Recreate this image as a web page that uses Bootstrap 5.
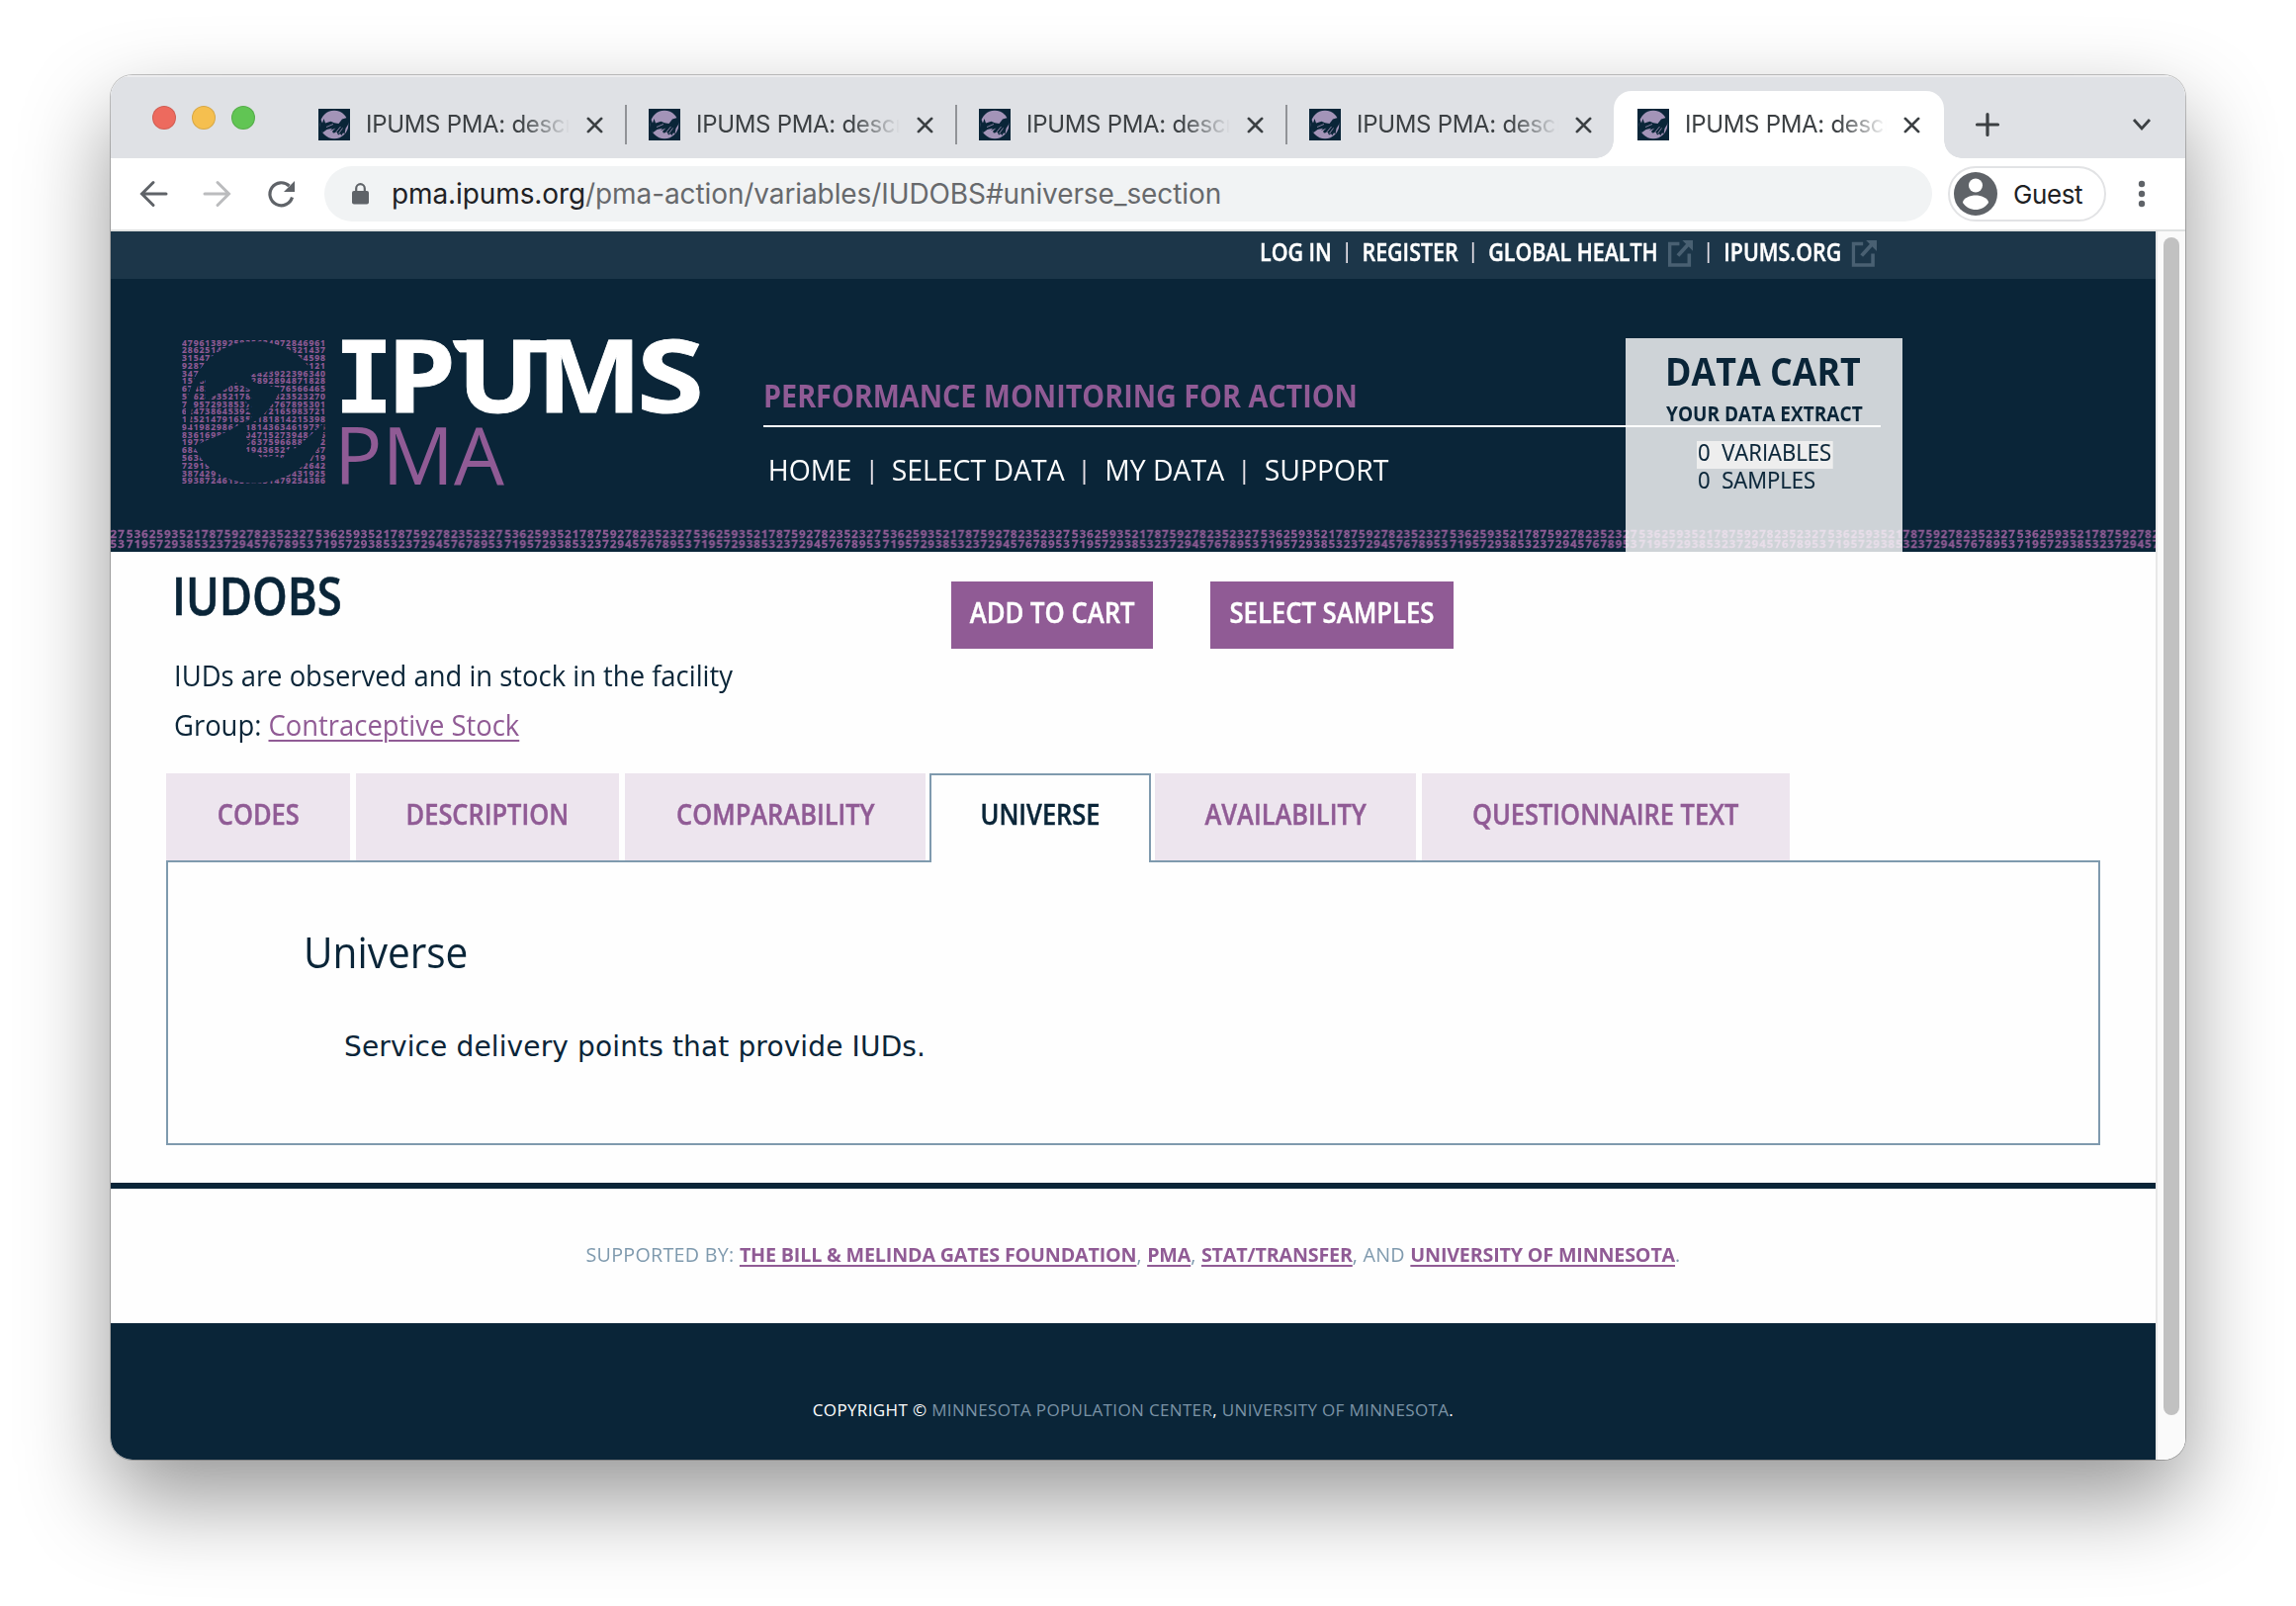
<!DOCTYPE html>
<html lang="en">
<head>
<meta charset="utf-8">
<meta name="viewport" content="width=device-width, initial-scale=1">
<title>IPUMS PMA: descr: IUDOBS</title>
<link href="https://cdn.jsdelivr.net/npm/bootstrap@5.3.0/dist/css/bootstrap.min.css" rel="stylesheet">
<style>
:root{--navy:#0a2538;--plum:#905b95;--slate:#7f9aae}
body{background:#fff;color:var(--navy);font-family:"Open Sans","Noto Sans",sans-serif;overflow:hidden;height:1624px;padding:76px 112px 0}
svg{display:block;flex:none}
a{color:inherit;text-decoration:none}
/* narrow lettering: --k is the horizontal squeeze */
.narrow{transform:scaleX(var(--k));transform-origin:0 50%}
.narrow-mid{display:inline-block;transform:scaleX(var(--k))}
/* browser window */
.win{width:2098px;height:1400px;border-radius:22px;overflow:hidden;background:#fff}
.win-shadow{width:2098px;border-radius:22px;box-shadow:0 0 0 1px rgba(0,0,0,.22),0 40px 90px rgba(0,0,0,.41)}
.chrome-ui{font-family:Inter,Roboto,sans-serif;color:#3c4043}
.tabstrip{height:84px;background:#dfe1e5;box-shadow:inset 0 2px 0 #ececee;padding-left:42px}
.lights{gap:16px;padding-top:31px;width:146px}
.lights i{width:24px;height:24px;border-radius:50%;border:1px solid rgba(0,0,0,.12)}
.btab{width:334px;height:68px;margin-top:16px;padding:0 0 0 22px}
.btab.short{width:330px}
.btab .ttl{width:206px;margin-left:16px;font-size:24px;line-height:64px;letter-spacing:-.3px;white-space:nowrap;overflow:hidden;-webkit-mask-image:linear-gradient(90deg,#000 76%,transparent);mask-image:linear-gradient(90deg,#000 76%,transparent)}
.btab.short .ttl,.btab.on .ttl{width:204px}
.btab .cls{margin-left:17px}
.btab .vsep{width:2px;height:40px;background:#919397;margin-left:22px}
.btab.on{background:#fff;border-radius:18px 18px 0 0;padding-left:24px;width:334px;position:relative}
.btab.on::before,.btab.on::after{content:"";position:absolute;bottom:0;width:18px;height:18px}
.btab.on::before{left:-18px;background:radial-gradient(circle at 0 0,transparent 17.5px,#fff 18px)}
.btab.on::after{right:-18px;background:radial-gradient(circle at 100% 0,transparent 17.5px,#fff 18px)}
.toolbar{height:74px;border-bottom:2px solid #dfe1e1;background:#fff;padding-left:27px}
.omni{width:1626px;height:56px;border-radius:28px;background:#f1f3f4;margin-left:26px;padding-left:28px;font-size:28px;line-height:56px;color:#67696c}
.omni .url{margin-left:23px;letter-spacing:-.1px;white-space:nowrap}
.omni b{font-weight:400;color:#202124}
.guest{width:160px;height:56px;border:2px solid #e2e3e5;border-radius:28px;margin-left:16px;padding-left:4px;font-size:26px;line-height:52px;color:#202124}
.guest span{margin-left:16px;letter-spacing:-.4px;padding-top:1px}
/* page and scrollbar */
.viewport{height:1242px}
.sheet{width:2068px;background:#fefefe}
.sbar{width:30px;border-left:2px solid #e8e8e8;background:#fafafa;padding:6px 0 0 6px}
.sbar i{display:block;width:16px;height:1191px;border-radius:8px;background:#c1c1c1}
.topbar{height:48px;background:#1c3649;padding-right:282px}
.topbar .links{--k:.856;transform-origin:100% 50%;font-size:25px;font-weight:600;line-height:41px;color:#fff;white-space:nowrap;-webkit-text-stroke:.45px}
.topbar .bar{width:2.4px;height:21px;margin:11px 16.7px 0;background:#e4dfe6}
.topbar svg{margin:8px 0 0 12px}
.masthead{height:276px;background:var(--navy);position:relative}
.logo{margin:60px 0 0 72px}
.headline{margin-left:62px;width:1130px;padding-top:99px}
.headline h2{--k:.898;font-size:32px;font-weight:700;line-height:38px;color:var(--plum);margin:0}
.headline hr{margin:11px 0 0;border:0;height:2px;background:#fff;opacity:1;position:relative;z-index:3}
.sitenav{--k:.963;padding:23px 0 0 5px;font-size:29.5px;line-height:40px;color:#fff}
.sitenav .bar{width:2px;height:25px;margin:10px 20px 0;background:#e4dfe6}
.digits{position:absolute;left:0;bottom:0}
.cart{position:absolute;left:1532px;top:60px;width:280px;height:216px;background:rgba(255,255,255,.8);z-index:2;white-space:nowrap}
.cart .t1{--k:.918;font-size:39px;font-weight:700;line-height:40px;margin:0 0 0 40px;padding-top:13px}
.cart .t2{--k:.866;font-size:22px;font-weight:700;line-height:28px;margin:0 0 0 41px;padding-top:8px}
.cart ul{--k:.9;margin:15px 0 0 72px;padding:0;list-style:none;font-size:24.5px}
.cart li{width:153px;height:28px;padding-left:1px;line-height:21px;-webkit-text-stroke:.2px}
.cart li span{display:inline-block;width:27px}
.cart li.hot{background:#eee}
/* variable summary */
.summary{height:224px;padding:0 0 0 64px}
.summary h1{--k:.875;font-size:52px;font-weight:600;line-height:60px;margin:14px 0 0 -2px;-webkit-text-stroke:.6px}
.summary .info{width:786px}
.summary p{--k:.945;font-size:29px;line-height:50px;margin:0}
.summary p:first-of-type{margin-top:26px}
.summary u{color:var(--plum);text-underline-offset:4px;text-decoration-thickness:2px}
.pbtn.btn{--k:.885;background:var(--plum);color:#fff;border:0;border-radius:0;height:68px;width:204px;padding:0;font-size:29px;font-weight:600;line-height:62px;margin-top:30px;white-space:nowrap;-webkit-text-stroke:.45px}
.pbtn.wide{width:246px;margin-left:58px}
.vtabs{height:90px;padding-left:56px}
.vtabs .vt{--k:.877;height:88px;background:#ede5ee;color:var(--plum);font-size:29px;font-weight:600;line-height:82px;text-align:center;margin-right:6px;white-space:nowrap;-webkit-text-stroke:.45px}
.vtabs .vt.on{height:90px;width:224px;background:#fefefe;color:var(--navy);border:2px solid var(--slate);border-bottom:0;line-height:78px;margin:0 4px 0 -2px;position:relative;z-index:1}
.pane{margin:-2px 56px 0;height:288px;border:2px solid var(--slate);padding:61px 0 0 137px}
.pane h3{--k:.943;font-size:43px;font-weight:400;line-height:60px;margin:0}
.pane p{font-family:"DejaVu Sans",sans-serif;font-size:28px;line-height:40px;margin:46px 0 0 41px;letter-spacing:.14px;white-space:nowrap}
.rule{height:6px;background:var(--navy);margin-top:38px}
.support{--k:.985;height:136px;font-size:20px;line-height:28px;padding-top:53px;color:var(--slate);letter-spacing:.28px;white-space:nowrap}
.support u{font-weight:700;color:var(--plum);letter-spacing:-.18px;text-underline-offset:3px;text-decoration-thickness:2px}
.foot{height:138px;background:var(--navy);color:#fff;font-size:17px;line-height:24px;padding-top:76px;letter-spacing:.35px}
.foot span{color:#7b93a6}
</style>
</head>
<body>
<svg width="0" height="0" class="position-absolute" aria-hidden="true">
  <defs>
    <symbol id="fav" viewBox="0 0 32 32"><rect width="32" height="32" fill="#0a2538"/><circle cx="16" cy="16" r="14.3" fill="#a394b8"/><path d="M1.500 21 2 10 4 14.500 5.500 10 7 14.500 12.500 12.800 16 14.300 20.500 15 24 10.500 30.500 8.500 30 16 27.500 20 26.500 25.500 25 24.200 23.500 27 22 25.200 20 26.500 18.800 23.800 15 24.500 14 22.800 17.500 19.500 12 22 14 19.800 8.500 21 4.500 24Z" fill="#0a2538"/><path d="M8 18.500 15 15.500M17.500 24 22.500 18M20.500 25 24.500 19.500" stroke="#a394b8" stroke-width=".8"/></symbol>
    <symbol id="x" viewBox="0 0 18 18"><path d="M2 2l14 14M16 2L2 16" stroke="#3c4043" stroke-width="2.900" stroke-linecap="round"/></symbol>
    <symbol id="ext" viewBox="0 0 26 28" preserveAspectRatio="none"><path d="M12 4.500H2V26H22V14.500" fill="none" stroke="#496072" stroke-width="3.600"/><path d="M10.500 16.500 22 4" stroke="#496072" stroke-width="3.800"/><path d="M15 1H26V12L22.500 8.500 18 4Z" fill="#496072"/></symbol>
  </defs>
</svg>
<div class="win-shadow"><div class="win">
  <div class="chrome-ui">
    <div class="tabstrip d-flex">
      <div class="lights d-flex"><i style="background:#ed6a5e"></i><i style="background:#f5bf4f"></i><i style="background:#61c554"></i></div>
      <div class="btab d-flex align-items-center"><svg width="32" height="32"><use href="#fav"/></svg><div class="ttl">IPUMS PMA: descr</div><svg class="cls" width="17" height="17"><use href="#x"/></svg><i class="vsep"></i></div>
      <div class="btab d-flex align-items-center"><svg width="32" height="32"><use href="#fav"/></svg><div class="ttl">IPUMS PMA: descr</div><svg class="cls" width="17" height="17"><use href="#x"/></svg><i class="vsep"></i></div>
      <div class="btab d-flex align-items-center"><svg width="32" height="32"><use href="#fav"/></svg><div class="ttl">IPUMS PMA: descr</div><svg class="cls" width="17" height="17"><use href="#x"/></svg><i class="vsep"></i></div>
      <div class="btab short d-flex align-items-center"><svg width="32" height="32"><use href="#fav"/></svg><div class="ttl">IPUMS PMA: descr</div><svg class="cls" width="17" height="17"><use href="#x"/></svg></div>
      <div class="btab on d-flex align-items-center"><svg width="32" height="32"><use href="#fav"/></svg><div class="ttl">IPUMS PMA: descr</div><svg class="cls" width="17" height="17"><use href="#x"/></svg></div>
      <svg width="26" height="26" viewBox="0 0 26 26" style="margin:37px 0 0 31px"><path d="M13 2.500v21M2.500 13h21" stroke="#3c4043" stroke-width="3.200" stroke-linecap="round"/></svg>
      <svg width="20" height="14" viewBox="0 0 20 14" style="margin:43px 0 0 133px"><path d="M2 2l8 9 8-9" fill="none" stroke="#3c4043" stroke-width="2.800"/></svg>
    </div>
    <div class="toolbar d-flex align-items-center">
      <svg width="32" height="32" viewBox="0 0 32 32"><path d="M29 16H5M16 4.500 4.500 16 16 27.500" fill="none" stroke="#5f6368" stroke-width="3" stroke-linecap="round"/></svg>
      <svg width="32" height="32" viewBox="0 0 32 32" style="margin-left:33px"><path d="M3 16H27M16 4.500 27.500 16 16 27.500" fill="none" stroke="#bbbcbe" stroke-width="3" stroke-linecap="round"/></svg>
      <svg width="32" height="32" viewBox="0 0 32 32" style="margin-left:33px"><path d="M26.500 19.500A11.500 11.500 0 1 1 23.500 8" fill="none" stroke="#5f6368" stroke-width="3.200"/><path d="M29 3V14H18Z" fill="#5f6368"/></svg>
      <div class="omni d-flex align-items-center" style="margin-left:27px"><svg width="17" height="22" viewBox="0 0 17 22"><rect y="8" width="17" height="13.500" rx="2" fill="#5f6368"/><path d="M4.200 9V5.500a4.300 4.300 0 0 1 8.600 0V9" fill="none" stroke="#5f6368" stroke-width="2.200"/></svg><div class="url"><b>pma.ipums.org</b>/pma-action/variables/IUDOBS#universe_section</div></div>
      <div class="guest d-flex align-items-center"><svg width="44" height="44" viewBox="0 0 44 44"><circle cx="22" cy="22" r="22" fill="#5f6368"/><circle cx="22" cy="13.500" r="7" fill="#fff"/><path d="M9 31c0-5 8-7.500 13-7.500S35 26 35 31c-3 4.500-8 7-13 7S12 35.500 9 31Z" fill="#fff"/></svg><span>Guest</span></div>
      <svg width="8" height="28" viewBox="0 0 8 28" style="margin-left:32px"><circle cx="4" cy="4" r="3.200" fill="#5f6368"/><circle cx="4" cy="14" r="3.200" fill="#5f6368"/><circle cx="4" cy="24" r="3.200" fill="#5f6368"/></svg>
    </div>
  </div>

  <div class="viewport d-flex">
    <div class="sheet">
      <nav class="topbar d-flex justify-content-end">
        <div class="links narrow d-flex"><a>LOG IN</a><i class="bar"></i><a>REGISTER</a><i class="bar"></i><a>GLOBAL HEALTH</a><svg width="30" height="28"><use href="#ext"/></svg><i class="bar"></i><a>IPUMS.ORG</a><svg width="30" height="28"><use href="#ext"/></svg></div>
      </nav>
      <header class="masthead d-flex align-items-start">
        <svg class="logo" width="526" height="160" viewBox="0 0 526 160">
          <g id="num" font-family="Noto Sans,sans-serif" font-weight="700" font-size="8.600" fill="#905b95" stroke="#905b95" stroke-width=".15"></g>
          <path transform="translate(-8,-6) scale(.3333)" fill="#0a2538" d="M38 290C20 150 110 28 240 28C320 28 380 60 412 110C350 118 290 115 232 128L235 146L262 160 325 168C312 200 302 215 285 235C262 262 240 275 218 285L212 300 228 306 215 322 235 330 218 345 222 362 250 366 265 382 300 374 330 382 350 352 372 352 400 325 455 275C460 380 350 458 240 458C170 458 90 420 62 345C100 325 150 310 180 290C205 275 240 268 240 245L218 240 236 225 218 212 236 200 225 190 236 178 190 152 135 185 95 210 96 145 78 152C60 180 52 230 48 290Z"/>
          <g fill="#fff" stroke="#fff" stroke-width=".8" font-family="Open Sans,sans-serif" font-weight="700" font-size="102">
            <text x="154" y="75" font-family="DejaVu Sans Mono,monospace" font-size="100" textLength="60" lengthAdjust="spacingAndGlyphs">I</text>
            <text x="207" y="75" textLength="70" lengthAdjust="spacingAndGlyphs">P</text>
            <text x="279" y="75" textLength="82" lengthAdjust="spacingAndGlyphs">U</text>
            <text x="359" y="75" textLength="106" lengthAdjust="spacingAndGlyphs">M</text>
            <text x="460" y="75" textLength="68" lengthAdjust="spacingAndGlyphs">S</text>
            <path d="M274 2.500H300V14H281Q276 10 274 2.500ZM339 2.500H376V14H339Z"/>
          </g>
          <text x="154" y="148" fill="#905b95" font-family="Open Sans,sans-serif" font-size="81" textLength="172" lengthAdjust="spacingAndGlyphs">PMA</text>
        </svg>
        <div class="headline">
          <h2 class="narrow">PERFORMANCE MONITORING FOR ACTION</h2>
          <hr>
          <nav class="sitenav narrow d-flex"><a>HOME</a><i class="bar"></i><a>SELECT DATA</a><i class="bar"></i><a>MY DATA</a><i class="bar"></i><a>SUPPORT</a></nav>
        </div>
        <svg class="digits" width="2068" height="26">
          <defs><pattern id="dg" x="16" width="191.200" height="26" patternUnits="userSpaceOnUse"><g font-family="Noto Sans,sans-serif" font-weight="700" font-size="11.400" fill="#905b95" stroke="#905b95" stroke-width=".3"><text x="0" y="11.500" textLength="189">5362593521787592782352327</text><text x="0" y="22" textLength="189">7195729385323729457678953</text></g></pattern></defs>
          <rect width="2068" height="26" fill="url(#dg)"/>
        </svg>
        <aside class="cart">
          <div class="t1 narrow">DATA CART</div>
          <div class="t2 narrow">YOUR DATA EXTRACT</div>
          <ul><li class="hot narrow"><span>0</span>VARIABLES</li><li class="narrow"><span>0</span>SAMPLES</li></ul>
        </aside>
      </header>

      <section class="summary d-flex align-items-start">
        <div class="info">
          <h1 class="narrow">IUDOBS</h1>
          <p class="narrow">IUDs are observed and in stock in the facility</p>
          <p class="narrow">Group: <u>Contraceptive Stock</u></p>
        </div>
        <a class="btn pbtn"><span class="narrow-mid">ADD TO CART</span></a><a class="btn pbtn wide"><span class="narrow-mid">SELECT SAMPLES</span></a>
      </section>
      <nav class="vtabs d-flex">
        <a class="vt" style="width:186px"><span class="narrow-mid">CODES</span></a><a class="vt" style="width:266px"><span class="narrow-mid">DESCRIPTION</span></a><a class="vt" style="width:304px"><span class="narrow-mid">COMPARABILITY</span></a><a class="vt on"><span class="narrow-mid">UNIVERSE</span></a><a class="vt" style="width:264px"><span class="narrow-mid">AVAILABILITY</span></a><a class="vt" style="width:372px"><span class="narrow-mid">QUESTIONNAIRE TEXT</span></a>
      </nav>
      <section class="pane">
        <h3 class="narrow">Universe</h3>
        <p>Service delivery points that provide IUDs.</p>
      </section>
      <div class="rule"></div>
      <div class="support text-center"><span class="narrow-mid">SUPPORTED BY: <u>THE BILL &amp; MELINDA GATES FOUNDATION</u>, <u>PMA</u>, <u>STAT/TRANSFER</u>, AND <u>UNIVERSITY OF MINNESOTA</u>.</span></div>
      <footer class="foot text-center">COPYRIGHT © <span>MINNESOTA POPULATION CENTER</span>, <span>UNIVERSITY OF MINNESOTA</span>.</footer>
    </div>
    <div class="sbar"><i></i></div>
  </div>
</div></div>
<script src="https://cdn.jsdelivr.net/npm/bootstrap@5.3.0/dist/js/bootstrap.bundle.min.js"></script>
<script>
/* rows of the digit field behind the logo */
const rows=["4796138925835634972846961","2862514739182640589321437","3154728190364752819634598","9287361540928374650192121","3472918564042423922396340","1528640917392892894871828","6748291605257281776566465","5362893521780927823523270","7195729385372945767895301","6247386453921872165983721","1252147916352181814215398","9419829864318143634619735","8361698247504715273948426","1972845603196375966887052","6842190753819436521490687","5638201947563820194750719","7291938475610293847562642","3874291650382917465431925","5938724619382651479254386"];
document.getElementById('num').innerHTML=rows.map((r,i)=>`<text x="0" y="${(7.6+i*7.76).toFixed(2)}" textLength="145">${r}</text>`).join('');
</script>
</body>
</html>
